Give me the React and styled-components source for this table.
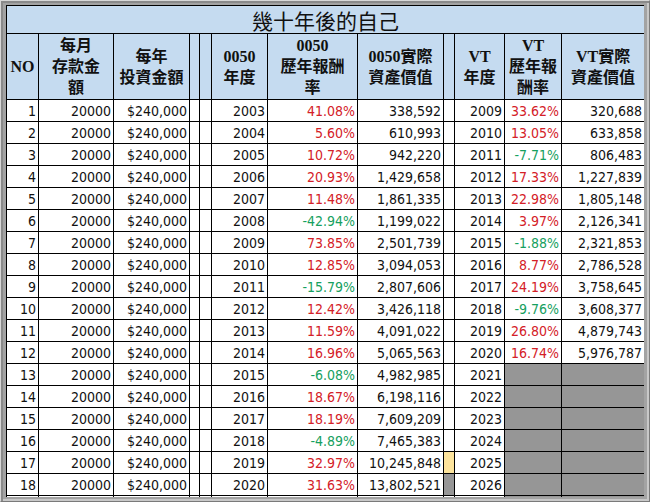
import styled, { createGlobalStyle } from "styled-components"

const GlobalStyle = createGlobalStyle`
  html, body {
    margin: 0;
    padding: 0;
    background: #a0a0a0;
  }
`

const RED = "#d42027"
const GREEN = "#16a060"

const widths = [32, 75, 76, 10, 12, 56, 90, 86, 11, 50, 57, 83]

const rows = [
  [1, "2003", "41.08%", "338,592", "2009", "33.62%", "320,688"],
  [2, "2004", "5.60%", "610,993", "2010", "13.05%", "633,858"],
  [3, "2005", "10.72%", "942,220", "2011", "-7.71%", "806,483"],
  [4, "2006", "20.93%", "1,429,658", "2012", "17.33%", "1,227,839"],
  [5, "2007", "11.48%", "1,861,335", "2013", "22.98%", "1,805,148"],
  [6, "2008", "-42.94%", "1,199,022", "2014", "3.97%", "2,126,341"],
  [7, "2009", "73.85%", "2,501,739", "2015", "-1.88%", "2,321,853"],
  [8, "2010", "12.85%", "3,094,053", "2016", "8.77%", "2,786,528"],
  [9, "2011", "-15.79%", "2,807,606", "2017", "24.19%", "3,758,645"],
  [10, "2012", "12.42%", "3,426,118", "2018", "-9.76%", "3,608,377"],
  [11, "2013", "11.59%", "4,091,022", "2019", "26.80%", "4,879,743"],
  [12, "2014", "16.96%", "5,065,563", "2020", "16.74%", "5,976,787"],
  [13, "2015", "-6.08%", "4,982,985", "2021", null, null],
  [14, "2016", "18.67%", "6,198,116", "2022", null, null],
  [15, "2017", "18.19%", "7,609,209", "2023", null, null],
  [16, "2018", "-4.89%", "7,465,383", "2024", null, null],
  [17, "2019", "32.97%", "10,245,848", "2025", null, null],
  [18, "2020", "31.63%", "13,802,521", "2026", null, null],
]

// spacer column fill between 0050 and VT blocks
const spacerFill = { 17: "#fde49c", 18: "#969696" }

const toneOf = (pct) => (pct && pct.startsWith("-") ? GREEN : RED)

const App = () => {
  return (
    <Frame>
      <GlobalStyle />
      <Sheet>
        <Table>
          <colgroup>
            {widths.map((w, i) => (
              <col key={i} style={{ width: w }} />
            ))}
          </colgroup>
          <tbody>
            <TitleRow>
              <TitleCell colSpan={12}>幾十年後的自己</TitleCell>
            </TitleRow>
            <HeadRow>
              <HeadCell>NO</HeadCell>
              <HeadCell>每月<br />存款金<br />額</HeadCell>
              <HeadCell>每年<br />投資金額</HeadCell>
              <HeadCell />
              <HeadCell />
              <HeadCell>0050<br />年度</HeadCell>
              <HeadCell>0050<br />歷年報酬<br />率</HeadCell>
              <HeadCell>0050實際<br />資產價值</HeadCell>
              <HeadCell />
              <HeadCell>VT<br />年度</HeadCell>
              <HeadCell>VT<br />歷年報<br />酬率</HeadCell>
              <HeadCell>VT實際<br />資產價值</HeadCell>
            </HeadRow>
            {rows.map(([no, y1, r1, v1, y2, r2, v2]) => (
              <DataRow key={no}>
                <Cell>{no}</Cell>
                <Cell>20000</Cell>
                <Cell>$240,000</Cell>
                <Cell />
                <Cell />
                <Cell>{y1}</Cell>
                <Cell $color={toneOf(r1)}>{r1}</Cell>
                <Cell>{v1}</Cell>
                <Cell $fill={spacerFill[no]} />
                <Cell>{y2}</Cell>
                <Cell $color={toneOf(r2)} $fill={r2 ? null : "#969696"}>{r2}</Cell>
                <Cell $fill={v2 ? null : "#969696"}>{v2}</Cell>
              </DataRow>
            ))}
            <DataRow>
              {widths.map((w, i) => (
                <Cell key={i} $fill={i >= 10 ? "#969696" : null} />
              ))}
            </DataRow>
          </tbody>
        </Table>
      </Sheet>
    </Frame>
  )
}

export default App

const Frame = styled.div`
  width: 650px;
  height: 502px;
  box-sizing: border-box;
  padding: 5px 6px 5px 6px;
  background: #a3a3a3;
  border-top: 1px solid #d8d8d8;
  border-left: 1px solid #d8d8d8;
  border-right: 1px solid #7a7a7a;
  border-bottom: 1px solid #7a7a7a;
  box-shadow: inset 2px 2px 0 #8a8a8a, inset -2px -2px 0 #c8c8c8;
`

const Sheet = styled.div`
  width: 638px;
  height: 492px;
  margin: -1px 0 0 -1px;
  overflow: hidden;
  background: #ffffff;
`

const Table = styled.table`
  border-collapse: collapse;
  table-layout: fixed;
  width: 638px;
  background: #ffffff;
`

const TitleRow = styled.tr`
  height: 28px;
`

const TitleCell = styled.td`
  border: 1px solid #000;
  background: #c5dbf0;
  text-align: center;
  padding: 0;
  font-family: "Noto Sans CJK TC", "Liberation Serif", serif;
  font-size: 21px;
  line-height: 26px;
  color: #111;
`

const HeadRow = styled.tr`
  height: 66px;
`

const HeadCell = styled.td`
  border: 1px solid #000;
  background: #c5dbf0;
  text-align: center;
  vertical-align: middle;
  padding: 0;
  font-family: "Liberation Serif", "Noto Sans CJK TC", serif;
  font-weight: 700;
  font-size: 16px;
  line-height: 21px;
  color: #111;
  white-space: nowrap;
`

const DataRow = styled.tr`
  height: 22px;
`

const Cell = styled.td`
  border: 1px solid #000;
  background: ${(p) => p.$fill || "#ffffff"};
  color: ${(p) => p.$color || "#111"};
  text-align: right;
  padding: 0 2px 0 0;
  font-family: "DejaVu Sans Condensed", "DejaVu Sans", sans-serif;
  font-stretch: condensed;
  font-size: 14px;
  line-height: 20px;
  white-space: nowrap;
  overflow: hidden;
`
